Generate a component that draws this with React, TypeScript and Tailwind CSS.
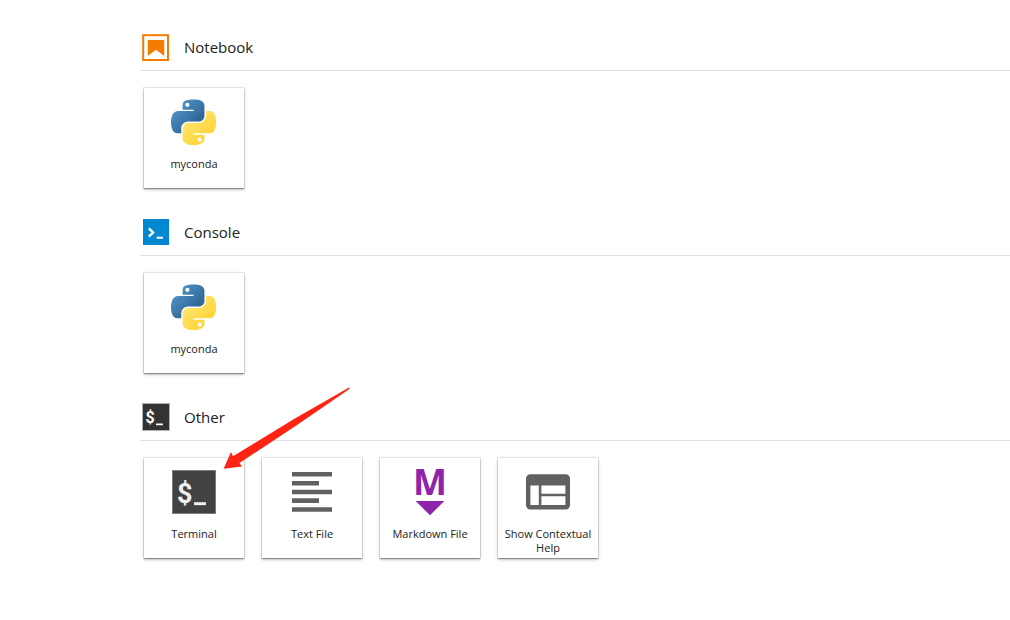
import React from 'react';

interface LauncherItem {
  label: string;
  icon: React.ReactNode;
}

interface SectionProps {
  title: string;
  icon: React.ReactNode;
  items: LauncherItem[];
  children?: React.ReactNode;
}

function NotebookIcon() {
  return (
    <svg className="w-7 h-7" viewBox="0 0 28 28" aria-hidden="true">
      <rect x="1.2" y="2.2" width="24.8" height="24.8" fill="#fff" stroke="#f57c00" strokeWidth="2" />
      <path d="M5.8 7h16.4v16l-8.2-6.2L5.8 23z" fill="#f57c00" />
    </svg>
  );
}

function ConsoleIcon() {
  return (
    <svg className="w-7 h-7" viewBox="0 0 28 28" aria-hidden="true">
      <rect x="1" y="1" width="26" height="26" fill="#0288d1" />
      <path d="M6.8 10.3l4.3 4.2-4.3 4.2" fill="none" stroke="#fff" strokeWidth="2.4" />
      <path d="M14.6 18.7H21v2h-6.4z" fill="#fff" />
    </svg>
  );
}

function SmallTerminalIcon() {
  return (
    <svg className="w-7 h-7" viewBox="0 0 28 28" aria-hidden="true">
      <rect x="0.5" y="0.5" width="27" height="27" fill="#333" stroke="#b0b0b0" />
      <text x="3.5" y="20" fontSize="16" className="font-['Roboto'] font-bold" fill="#fff">$</text>
      <path d="M14 20.5h7v1.7h-7z" fill="#fff" />
    </svg>
  );
}

function PythonIcon() {
  return (
    <svg className="w-[46px] h-[46px]" viewBox="13 1 104 104" aria-hidden="true">
      <defs>
        <linearGradient id="py-blue" x1="0" y1="0" x2="1" y2="1">
          <stop offset="0" stopColor="#5a9fd4" />
          <stop offset="0.7" stopColor="#306998" />
        </linearGradient>
        <linearGradient id="py-yellow" x1="1" y1="1" x2="0.2" y2="0.1">
          <stop offset="0.3" stopColor="#ffd43b" />
          <stop offset="1" stopColor="#ffe873" />
        </linearGradient>
      </defs>
      <path
        fill="url(#py-blue)"
        d="M63.391 1.988c-4.222.02-8.252.379-11.8 1.007-10.45 1.846-12.346 5.71-12.346 12.837v9.411h24.693v3.137H29.977c-7.176 0-13.46 4.313-15.426 12.521-2.268 9.405-2.368 15.275 0 25.096 1.755 7.311 5.947 12.519 13.124 12.519h8.491V67.234c0-8.151 7.051-15.34 15.426-15.34h24.665c6.866 0 12.346-5.654 12.346-12.548V15.833c0-6.693-5.646-11.72-12.346-12.837-4.244-.706-8.645-1.027-12.866-1.008zM50.037 9.557c2.55 0 4.634 2.117 4.634 4.721 0 2.593-2.083 4.69-4.634 4.69-2.56 0-4.633-2.097-4.633-4.69-.001-2.604 2.073-4.721 4.633-4.721z"
      />
      <path
        fill="url(#py-yellow)"
        d="M91.682 28.38v10.966c0 8.5-7.208 15.655-15.426 15.655H51.591c-6.756 0-12.346 5.783-12.346 12.549v23.515c0 6.691 5.818 10.628 12.346 12.547 7.816 2.297 16.013 2.713 24.665 0 6.216-1.801 12.346-5.423 12.346-12.547v-9.412H63.938v-3.138h37.012c7.176 0 9.852-5.005 12.348-12.519 2.578-7.735 2.467-15.174 0-25.096-1.774-7.145-5.161-12.521-12.348-12.521h-9.268zM77.809 87.927c2.561 0 4.634 2.097 4.634 4.692 0 2.602-2.074 4.719-4.634 4.719-2.55 0-4.633-2.117-4.633-4.719 0-2.595 2.083-4.692 4.633-4.692z"
      />
    </svg>
  );
}

function TerminalIcon() {
  return (
    <svg className="w-11 h-11" viewBox="0 0 44 44" aria-hidden="true">
      <rect x="0.5" y="0.5" width="43" height="43" fill="#424242" stroke="#7a7a7a" />
      <text x="5" y="32.6" fontSize="27" className="font-['Roboto'] font-bold" fill="#f0f0f0">$</text>
      <path d="M22 32.2h12v3H22z" fill="#f0f0f0" />
    </svg>
  );
}

function TextFileIcon() {
  return (
    <svg className="w-10 h-10" viewBox="0 0 40 40" fill="#616161" aria-hidden="true">
      <path d="M0 0h40v4.6H0zM0 9h27v4.6H0zM0 17.7h40v4.6H0zM0 26.3h27v4.6H0zM0 35.2h40v4.6H0z" />
    </svg>
  );
}

function MarkdownIcon() {
  return (
    <svg className="w-12 h-[68px] overflow-visible" viewBox="0 0 48 68" fill="#8e24aa" aria-hidden="true">
      <text x="24" y="37" fontSize="36" textAnchor="middle" className="font-['Open_Sans'] font-bold">M</text>
      <path d="M9.7 43h28.6L24 57.3z" />
    </svg>
  );
}

function HelpIcon() {
  return (
    <svg className="w-11 h-9" viewBox="0 0 44 36" aria-hidden="true">
      <rect x="0" y="0.2" width="44" height="35.4" rx="4.5" fill="#616161" />
      <path d="M4.4 11.5h8.4V31H4.4zM15.4 11.5h24v8.3h-24zM15.4 22.2h24V31h-24z" fill="#fff" />
    </svg>
  );
}

function Arrow() {
  return (
    <svg
      className="absolute left-[79px] -top-[71px] w-[128px] h-[84px] pointer-events-none"
      viewBox="0 0 128 84"
      fill="#ff2314"
      aria-hidden="true"
    >
      <path d="M125.6 0.7c1-.4 1.6.7.8 1.3L74 38 16.5 76l2.5 3.4L0.6 81.8 8 65l2 4.2L71 32z" />
    </svg>
  );
}

function LauncherCard({ label, icon }: LauncherItem) {
  return (
    <button
      type="button"
      className="w-[100px] h-[100px] flex flex-col items-center bg-white shadow-[0_0_0_1px_rgba(0,0,0,0.08),0_1px_1px_rgba(0,0,0,0.25),0_2px_2px_rgba(0,0,0,0.14),0_1px_5px_rgba(0,0,0,0.12)] cursor-pointer"
    >
      <span className="h-[68px] shrink-0 flex items-center justify-center">{icon}</span>
      <span className="mt-px text-[11px] leading-[14px] text-center">{label}</span>
    </button>
  );
}

function Section({ title, icon, items, children }: SectionProps) {
  return (
    <section>
      <div className="flex items-center gap-3.5 pl-0.5 pb-[9px] border-b border-[#e0e0e0]">
        {icon}
        <h2 className="text-[15px] leading-7">{title}</h2>
      </div>
      <div className="relative ml-1 mt-[17px] flex flex-wrap gap-[18px]">
        {items.map((item) => (
          <LauncherCard key={item.label} label={item.label} icon={item.icon} />
        ))}
        {children}
      </div>
    </section>
  );
}

export default function App() {
  return (
    <main className="min-h-screen bg-white text-[#212121] font-['Open_Sans','Noto_Sans',sans-serif] pl-[140px] pt-[33px] pb-8 flex flex-col gap-[30px]">
      <Section
        title="Notebook"
        icon={<NotebookIcon />}
        items={[{ label: 'myconda', icon: <PythonIcon /> }]}
      />
      <Section
        title="Console"
        icon={<ConsoleIcon />}
        items={[{ label: 'myconda', icon: <PythonIcon /> }]}
      />
      <Section
        title="Other"
        icon={<SmallTerminalIcon />}
        items={[
          { label: 'Terminal', icon: <TerminalIcon /> },
          { label: 'Text File', icon: <TextFileIcon /> },
          { label: 'Markdown File', icon: <MarkdownIcon /> },
          { label: 'Show Contextual Help', icon: <HelpIcon /> },
        ]}
      >
        <Arrow />
      </Section>
    </main>
  );
}
